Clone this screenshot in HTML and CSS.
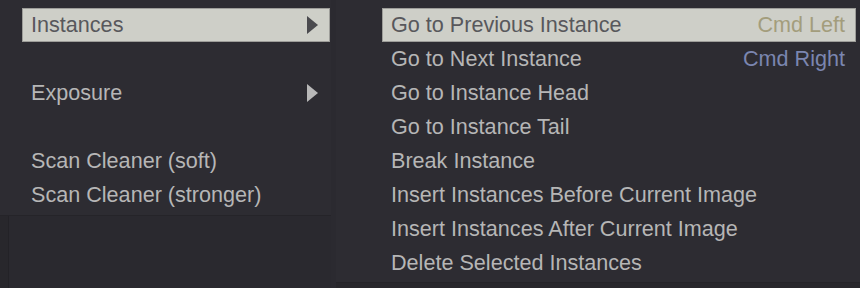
FILE: index.html
```html
<!DOCTYPE html>
<html>
<head>
<meta charset="utf-8">
<link rel="stylesheet" href="styles.css">
</head>
<body>
<div class="screen">
  <div class="left-col">
    <div class="menu menu-left">
      <div class="item active"><span class="label">Instances</span><span class="arrow"></span></div>
      <div class="item blank"></div>
      <div class="item"><span class="label">Exposure</span><span class="arrow"></span></div>
      <div class="item blank"></div>
      <div class="item"><span class="label">Scan Cleaner (soft)</span></div>
      <div class="item"><span class="label">Scan Cleaner (stronger)</span></div>
    </div>
    <div class="under"></div>
  </div>
  <div class="gap"></div>
  <div class="right-col">
    <div class="menu menu-right">
      <div class="item active"><span class="label">Go to Previous Instance</span><span class="key key-left">Cmd Left</span></div>
      <div class="item"><span class="label">Go to Next Instance</span><span class="key key-right">Cmd Right</span></div>
      <div class="item"><span class="label">Go to Instance Head</span></div>
      <div class="item"><span class="label">Go to Instance Tail</span></div>
      <div class="item"><span class="label">Break Instance</span></div>
      <div class="item"><span class="label">Insert Instances Before Current Image</span></div>
      <div class="item"><span class="label">Insert Instances After Current Image</span></div>
      <div class="item"><span class="label">Delete Selected Instances</span></div>
    </div>
  </div>
</div>
</body>
</html>
```

FILE: styles.css
```css
html, body {
  margin: 0;
  padding: 0;
  background: #28272c;
}
.screen {
  display: flex;
  width: 860px;
  height: 288px;
  overflow: hidden;
  font-family: "Liberation Sans", Arial, sans-serif;
  font-size: 21.6px;
}
.left-col {
  width: 331px;
  display: flex;
  flex-direction: column;
}
.menu {
  background: #2d2c32;
  box-sizing: border-box;
}
.menu-left {
  height: 216px;
  padding: 8px 1px 4px 22px;
  border-bottom: 1px solid #252429;
}
.under {
  flex: 1;
  margin-left: 8px;
  border-left: 1px solid #232227;
  background: #2a292f;
}
.gap {
  width: 5px;
  background: #2b2a30;
}
.right-col {
  width: 524px;
}
.menu-right {
  height: 283px;
  padding: 8px 4px 3px 46px;
  border-bottom: 1px solid #252429;
}
.item {
  height: 34px;
  box-sizing: border-box;
  display: flex;
  align-items: center;
  justify-content: space-between;
  padding: 0 11px 0 8px;
  color: #b6b6b6;
  border: 1px solid transparent;
  white-space: nowrap;
}
.menu-right .item {
  padding-right: 10px;
}
.item.active {
  background: #cecfc8;
  border-color: #9d9d99;
  color: #58585c;
}
.arrow {
  width: 0;
  height: 0;
  border-top: 9px solid transparent;
  border-bottom: 9px solid transparent;
  border-left: 11px solid #b8b8b8;
}
.item.active .arrow {
  border-left-color: #4a4a4e;
}
.key-left {
  color: #a39d7c;
}
.key-right {
  color: #7b86b0;
}
```
